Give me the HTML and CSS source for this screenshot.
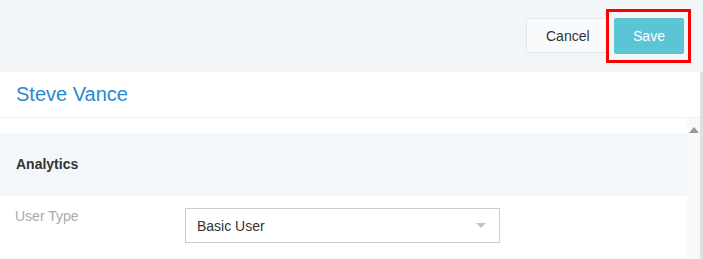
FILE: index.html
```html
<!DOCTYPE html>
<html>
<head>
  <title>Steve Vance</title>
  <link rel="stylesheet" href="styles.css">
</head>
<body>
<header class="topbar">
  <button class="btn btn-cancel">Cancel</button>
  <button class="btn btn-save">Save</button>
  <!-- highlight drawn over the save button -->
  <div class="highlight"></div>
</header>

<div class="main">
  <div class="main-content">
    <div class="name-header">Steve Vance</div>

    <div class="body">
      <div class="scroll-area">
        <div class="section-title">Analytics</div>
        <div class="form-row">
          <label class="field-label">User Type</label>
          <div class="select-box">
            <span>Basic User</span>
            <span class="caret"></span>
          </div>
        </div>
      </div>
      <div class="inner-scrollbar">
        <span class="arrow-up"></span>
      </div>
    </div>
  </div>
  <div class="outer-scrollbar"></div>
</div>
</body>
</html>
```

FILE: styles.css
```css
/* Reset default margin for the body */
body {
  margin: 0;
  padding: 0;
  font-family: "Liberation Sans", Arial, sans-serif;
  font-size: 14px;
  color: #333;
  background-color: #fff;
}

/* Top action bar */
.topbar {
  position: relative;
  height: 72px;
  box-sizing: border-box;
  background-color: #f3f6f9;
  display: flex;
  justify-content: flex-end;
  align-items: flex-start;
  gap: 5px;
  padding: 18px 19px 0 0;
}

.btn {
  font-family: inherit;
  font-size: 14px;
  border-radius: 2px;
  cursor: pointer;
  padding: 0 19px;
}

.btn-cancel {
  height: 35px;
  width: 83px;
  background-color: #f8fafc;
  border: 1px solid #e2e6ea;
  color: #333;
}

.btn-save {
  height: 36px;
  width: 70px;
  background-color: #5bc5d6;
  border: none;
  color: #fff;
}

/* Red annotation box round the save button */
.highlight {
  position: absolute;
  left: 606px;
  top: 9px;
  width: 85px;
  height: 54px;
  box-sizing: border-box;
  border: 3px solid #f00;
}

/* Area below the top bar */
.main {
  display: flex;
  height: 187px;
  overflow: hidden;
}

.main-content {
  flex: 1;
  display: flex;
  flex-direction: column;
}

.outer-scrollbar {
  width: 3px;
  background-color: #e0e0e0;
}

.name-header {
  height: 45px;
  line-height: 45px;
  padding-left: 16px;
  font-size: 20px;
  color: #2a88cf;
  border-bottom: 1px solid #eef1f4;
}

.body {
  flex: 1;
  display: flex;
}

.scroll-area {
  flex: 1;
  padding-top: 15px;
}

.inner-scrollbar {
  width: 13px;
  background-color: #f9f9f9;
  display: flex;
  justify-content: center;
  padding-top: 9px;
}

.arrow-up {
  width: 0;
  height: 0;
  border-left: 5px solid transparent;
  border-right: 5px solid transparent;
  border-bottom: 6px solid #999;
}

/* Section heading */
.section-title {
  height: 63px;
  line-height: 62px;
  padding-left: 16px;
  background-color: #f4f7fa;
  font-weight: bold;
  color: #333;
}

/* Form row */
.form-row {
  display: flex;
  align-items: flex-start;
  padding-top: 12px;
}

.field-label {
  width: 170px;
  padding-left: 15px;
  line-height: 16px;
  color: #aaa;
}

.select-box {
  width: 315px;
  height: 35px;
  box-sizing: border-box;
  border: 1px solid #ccc;
  display: flex;
  align-items: center;
  justify-content: space-between;
  padding: 0 13px 0 11px;
  color: #333;
}

.caret {
  width: 0;
  height: 0;
  border-left: 5px solid transparent;
  border-right: 5px solid transparent;
  border-top: 5px solid #c4c4c4;
}
```
